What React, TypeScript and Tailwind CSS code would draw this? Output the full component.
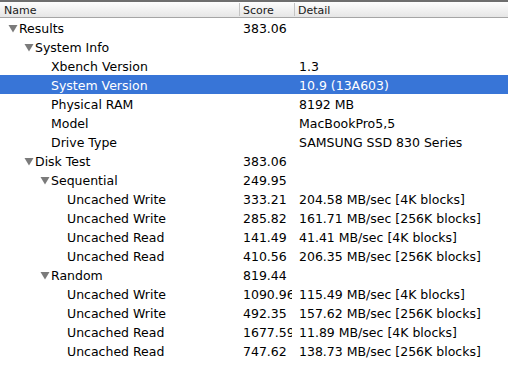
type Row = {
  name: string;
  level: number;
  open?: boolean;
  score?: string;
  detail?: string;
  selected?: boolean;
};

const ROWS: Row[] = [
  { name: "Results", level: 0, open: true, score: "383.06" },
  { name: "System Info", level: 1, open: true },
  { name: "Xbench Version", level: 2, detail: "1.3" },
  { name: "System Version", level: 2, detail: "10.9 (13A603)", selected: true },
  { name: "Physical RAM", level: 2, detail: "8192 MB" },
  { name: "Model", level: 2, detail: "MacBookPro5,5" },
  { name: "Drive Type", level: 2, detail: "SAMSUNG SSD 830 Series" },
  { name: "Disk Test", level: 1, open: true, score: "383.06" },
  { name: "Sequential", level: 2, open: true, score: "249.95" },
  { name: "Uncached Write", level: 3, score: "333.21", detail: "204.58 MB/sec [4K blocks]" },
  { name: "Uncached Write", level: 3, score: "285.82", detail: "161.71 MB/sec [256K blocks]" },
  { name: "Uncached Read", level: 3, score: "141.49", detail: "41.41 MB/sec [4K blocks]" },
  { name: "Uncached Read", level: 3, score: "410.56", detail: "206.35 MB/sec [256K blocks]" },
  { name: "Random", level: 2, open: true, score: "819.44" },
  { name: "Uncached Write", level: 3, score: "1090.96", detail: "115.49 MB/sec [4K blocks]" },
  { name: "Uncached Write", level: 3, score: "492.35", detail: "157.62 MB/sec [256K blocks]" },
  { name: "Uncached Read", level: 3, score: "1677.59", detail: "11.89 MB/sec [4K blocks]" },
  { name: "Uncached Read", level: 3, score: "747.62", detail: "138.73 MB/sec [256K blocks]" },
];

const PAD = ["pl-[8px]", "pl-[24px]", "pl-[40px]", "pl-[56px]"];

function Disclosure() {
  return (
    <svg width="11" height="9" viewBox="0 0 11 9" className="shrink-0 -mt-[1px]">
      <path d="M0.5 1 L9.5 1 L5 8.5 Z" fill="#7b7b7b" />
    </svg>
  );
}

export default function App() {
  return (
    <div className="w-[508px] h-[376px] bg-white overflow-hidden font-['DejaVu_Sans',sans-serif] text-[12.5px] text-black">
      {/* Column header */}
      <div className="flex h-[18px] border-t-2 border-t-[#6e6e6e] border-b border-b-[#a5a5a5] bg-gradient-to-b from-[#fdfdfd] to-[#e6e6e6] text-[11px] leading-[15px] text-[#1a1a1a] font-['Lucida_Grande','DejaVu_Sans',sans-serif]">
        <div className="w-[240px] pl-[4px] border-r border-r-[#c4c4c4] my-[1px]">Name</div>
        <div className="w-[55px] pl-[3px] border-r border-r-[#c4c4c4] my-[1px]">Score</div>
        <div className="flex-1 pl-[3px] my-[1px]">Detail</div>
      </div>

      {/* Outline rows */}
      <div className="flex flex-col">
        {ROWS.map((r, i) => (
          <div
            key={i}
            className={`flex h-[19px] items-center leading-[19px] pt-[2px] ${
              r.selected ? "bg-[#3875d7] text-white" : ""
            }`}
          >
            <div className={`w-[240px] flex items-center whitespace-nowrap ${PAD[r.level]}`}>
              {r.open ? <Disclosure /> : <span className="w-[11px] shrink-0" />}
              <span>{r.name}</span>
            </div>
            <div className="w-[52px] pl-[3px] overflow-hidden whitespace-nowrap">{r.score}</div>
            <div className="flex-1 pl-[7px] whitespace-nowrap">{r.detail}</div>
          </div>
        ))}
      </div>
    </div>
  );
}
